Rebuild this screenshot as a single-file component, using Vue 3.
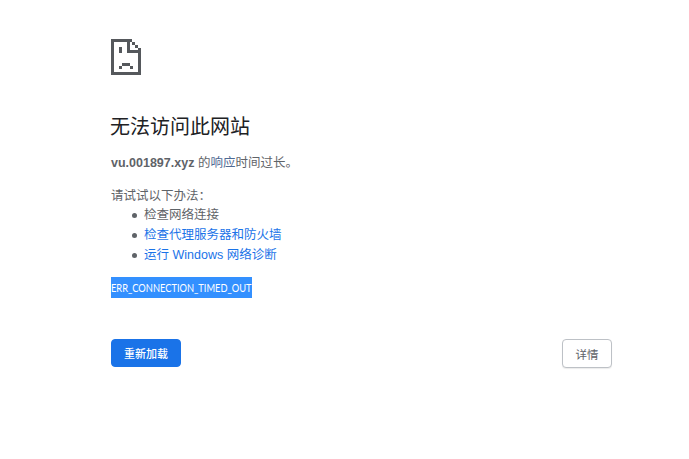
<script setup>
const items = [
  { text: '检查网络连接', link: false },
  { text: '检查代理服务器和防火墙', link: true },
  { text: '运行 Windows 网络诊断', link: true },
]
</script>

<template>
  <div class="page">
    <svg class="icon" width="30" height="36" viewBox="0 0 30 36" shape-rendering="crispEdges" aria-hidden="true">
      <g fill="#55585c">
        <path d="M0 0h18v3H3v30h24V12h3v24H0z" />
        <path d="M18 0h3v3h-3zM21 3h3v3h-3zM24 6h3v3h-3zM27 9h3v3h-3zM16 3h3v8h8v3H16z" />
        <path d="M8 8h3v6H8zM8 27h3v3H8zM11 24h8v3h-8zM19 27h3v3h-3z" />
      </g>
    </svg>
    <h1 class="title">无法访问此网站</h1>
    <p class="summary"><strong>vu.001897.xyz</strong> 的<span class="link-soft">响应</span>时间过长。</p>
    <p class="try">请试试以下办法：</p>
    <ul class="list">
      <li v-for="item in items" :key="item.text"><span :class="{ link: item.link }">{{ item.text }}</span></li>
    </ul>
    <div class="code"><div class="selected"><span class="fit">ERR_CONNECTION_TIMED_OUT</span></div></div>
    <div class="actions">
      <button class="reload">重新加载</button>
      <button class="details">详情</button>
    </div>
  </div>
</template>

<style>
body { background: #fff; }
</style>

<style scoped>
.page {
  box-sizing: border-box;
  width: 501px;
  margin-left: 111px;
  padding-top: 39px;
  height: 459px;
  font-family: "Liberation Sans", "Noto Sans CJK SC", sans-serif;
  font-size: 12.5px;
  line-height: 20px;
  color: #5f6368;
}
.icon { display: block; }
.title {
  margin: 39px 0 0 -1px;
  font-size: 20px;
  line-height: 26px;
  font-weight: 400;
  color: #202124;
}
.summary { margin: 13px 0 0; }
.summary strong { font-weight: 700; }
.link-soft { color: #4f6a94; }
.try { margin: 13px 0 0; height: 19px; }
.list { margin: 0; padding: 0 0 0 21px; list-style: none; }
.list li { height: 20px; display: flex; align-items: center; gap: 7px; }
.list li::before {
  content: "";
  width: 5px;
  height: 5px;
  border-radius: 50%;
  background: #5f6368;
  flex: none;
}
.link { color: #1a73e8; }
.code {
  margin-top: 12px;
  height: 21px;
}
.selected {
  width: 141px;
  height: 21px;
  font-family: "Lato", sans-serif;
  font-size: 11px;
  line-height: 21px;
  white-space: nowrap;
  background: #3390ff;
  color: #fff;
}
.fit {
  display: inline-block;
  transform: scaleX(0.845);
  transform-origin: left center;
}
.actions {
  margin-top: 41px;
  display: flex;
  justify-content: space-between;
  align-items: flex-start;
}
button {
  font-family: inherit;
  box-sizing: border-box;
  border-radius: 4px;
  padding: 0;
}
.reload {
  width: 70px;
  height: 28px;
  font-size: 11px;
  background: #1a73e8;
  border: 1px solid #1a73e8;
  color: #fff;
  font-weight: 500;
}
.details {
  width: 50px;
  height: 29px;
  font-size: 11.5px;
  background: #fff;
  border: 1px solid #bdc1c6;
  color: #5f6368;
  box-shadow: 0 1px 1px rgba(0,0,0,.08);
}
</style>
